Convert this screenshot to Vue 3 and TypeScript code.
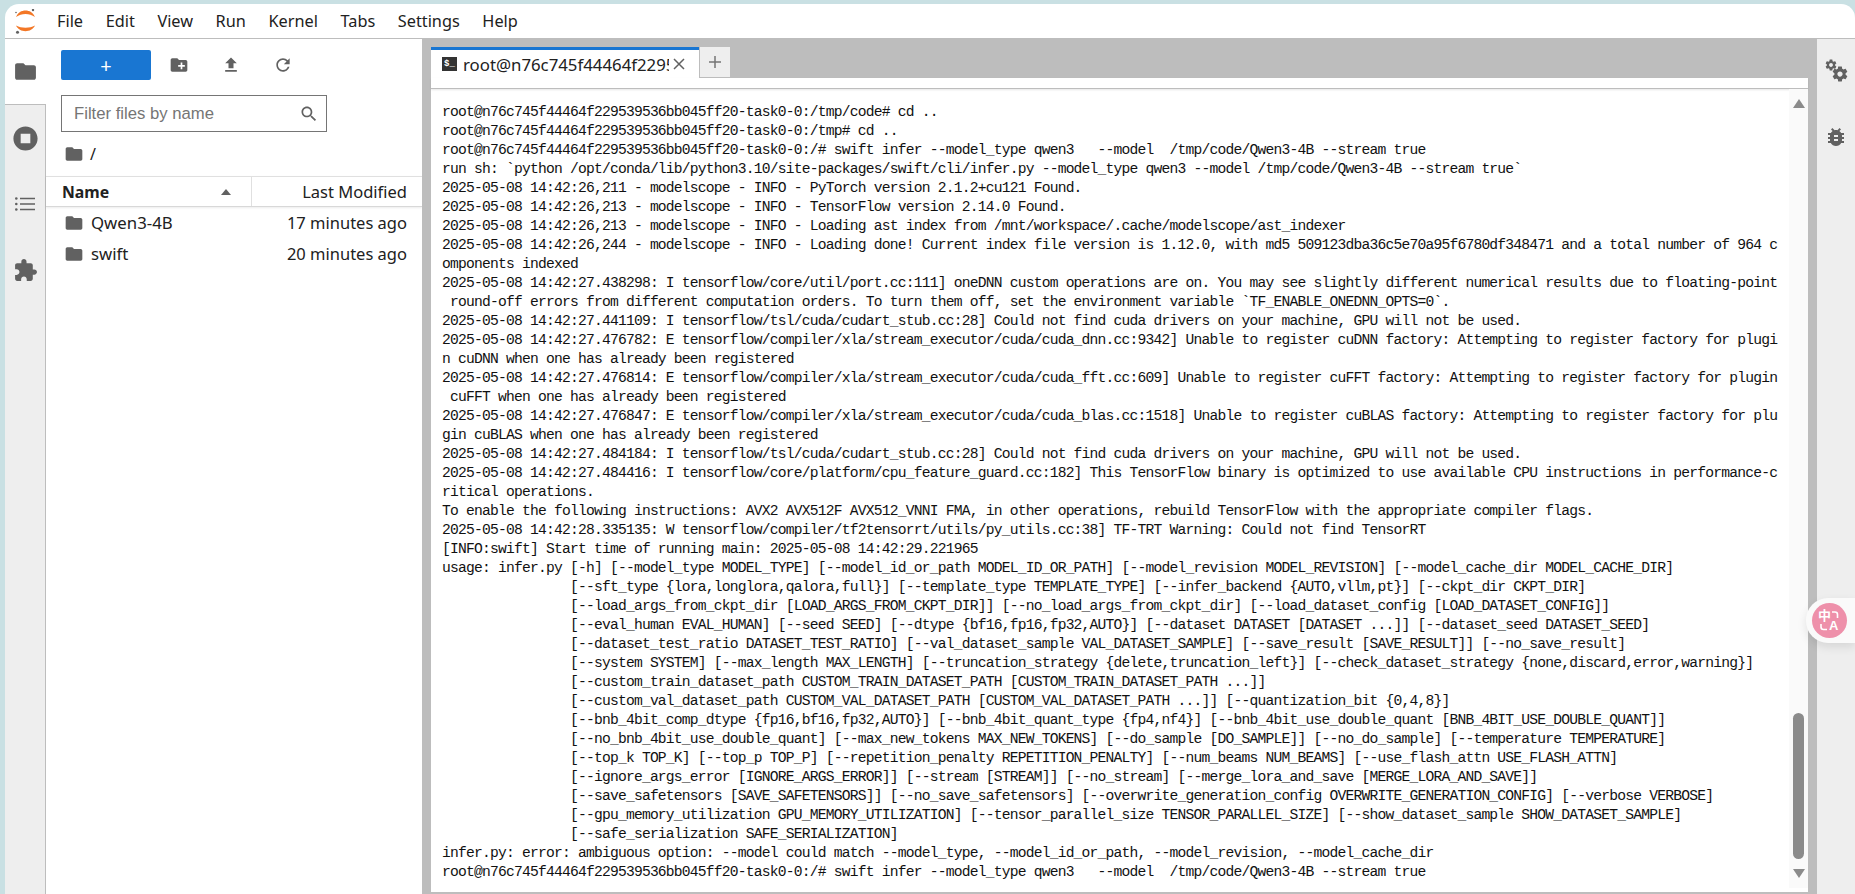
<script setup lang="ts">
const host = 'root@n76c745f44464f229539536bb045ff20-task0-0'
const pad = ' '.repeat(16)
const usageTail: string[] = [
  '[--sft_type {lora,longlora,qalora,full}] [--template_type TEMPLATE_TYPE] [--infer_backend {AUTO,vllm,pt}] [--ckpt_dir CKPT_DIR]',
  '[--load_args_from_ckpt_dir [LOAD_ARGS_FROM_CKPT_DIR]] [--no_load_args_from_ckpt_dir] [--load_dataset_config [LOAD_DATASET_CONFIG]]',
  '[--eval_human EVAL_HUMAN] [--seed SEED] [--dtype {bf16,fp16,fp32,AUTO}] [--dataset DATASET [DATASET ...]] [--dataset_seed DATASET_SEED]',
  '[--dataset_test_ratio DATASET_TEST_RATIO] [--val_dataset_sample VAL_DATASET_SAMPLE] [--save_result [SAVE_RESULT]] [--no_save_result]',
  '[--system SYSTEM] [--max_length MAX_LENGTH] [--truncation_strategy {delete,truncation_left}] [--check_dataset_strategy {none,discard,error,warning}]',
  '[--custom_train_dataset_path CUSTOM_TRAIN_DATASET_PATH [CUSTOM_TRAIN_DATASET_PATH ...]]',
  '[--custom_val_dataset_path CUSTOM_VAL_DATASET_PATH [CUSTOM_VAL_DATASET_PATH ...]] [--quantization_bit {0,4,8}]',
  '[--bnb_4bit_comp_dtype {fp16,bf16,fp32,AUTO}] [--bnb_4bit_quant_type {fp4,nf4}] [--bnb_4bit_use_double_quant [BNB_4BIT_USE_DOUBLE_QUANT]]',
  '[--no_bnb_4bit_use_double_quant] [--max_new_tokens MAX_NEW_TOKENS] [--do_sample [DO_SAMPLE]] [--no_do_sample] [--temperature TEMPERATURE]',
  '[--top_k TOP_K] [--top_p TOP_P] [--repetition_penalty REPETITION_PENALTY] [--num_beams NUM_BEAMS] [--use_flash_attn USE_FLASH_ATTN]',
  '[--ignore_args_error [IGNORE_ARGS_ERROR]] [--stream [STREAM]] [--no_stream] [--merge_lora_and_save [MERGE_LORA_AND_SAVE]]',
  '[--save_safetensors [SAVE_SAFETENSORS]] [--no_save_safetensors] [--overwrite_generation_config OVERWRITE_GENERATION_CONFIG] [--verbose VERBOSE]',
  '[--gpu_memory_utilization GPU_MEMORY_UTILIZATION] [--tensor_parallel_size TENSOR_PARALLEL_SIZE] [--show_dataset_sample SHOW_DATASET_SAMPLE]',
  '[--safe_serialization SAFE_SERIALIZATION]',
]
const lines: string[] = [
  `${host}:/tmp/code# cd ..`,
  `${host}:/tmp# cd ..`,
  `${host}:/# swift infer --model_type qwen3   --model  /tmp/code/Qwen3-4B --stream true`,
  'run sh: `python /opt/conda/lib/python3.10/site-packages/swift/cli/infer.py --model_type qwen3 --model /tmp/code/Qwen3-4B --stream true`',
  '2025-05-08 14:42:26,211 - modelscope - INFO - PyTorch version 2.1.2+cu121 Found.',
  '2025-05-08 14:42:26,213 - modelscope - INFO - TensorFlow version 2.14.0 Found.',
  '2025-05-08 14:42:26,213 - modelscope - INFO - Loading ast index from /mnt/workspace/.cache/modelscope/ast_indexer',
  '2025-05-08 14:42:26,244 - modelscope - INFO - Loading done! Current index file version is 1.12.0, with md5 509123dba36c5e70a95f6780df348471 and a total number of 964 c',
  'omponents indexed',
  '2025-05-08 14:42:27.438298: I tensorflow/core/util/port.cc:111] oneDNN custom operations are on. You may see slightly different numerical results due to floating-point',
  ' round-off errors from different computation orders. To turn them off, set the environment variable `TF_ENABLE_ONEDNN_OPTS=0`.',
  '2025-05-08 14:42:27.441109: I tensorflow/tsl/cuda/cudart_stub.cc:28] Could not find cuda drivers on your machine, GPU will not be used.',
  '2025-05-08 14:42:27.476782: E tensorflow/compiler/xla/stream_executor/cuda/cuda_dnn.cc:9342] Unable to register cuDNN factory: Attempting to register factory for plugi',
  'n cuDNN when one has already been registered',
  '2025-05-08 14:42:27.476814: E tensorflow/compiler/xla/stream_executor/cuda/cuda_fft.cc:609] Unable to register cuFFT factory: Attempting to register factory for plugin',
  ' cuFFT when one has already been registered',
  '2025-05-08 14:42:27.476847: E tensorflow/compiler/xla/stream_executor/cuda/cuda_blas.cc:1518] Unable to register cuBLAS factory: Attempting to register factory for plu',
  'gin cuBLAS when one has already been registered',
  '2025-05-08 14:42:27.484184: I tensorflow/tsl/cuda/cudart_stub.cc:28] Could not find cuda drivers on your machine, GPU will not be used.',
  '2025-05-08 14:42:27.484416: I tensorflow/core/platform/cpu_feature_guard.cc:182] This TensorFlow binary is optimized to use available CPU instructions in performance-c',
  'ritical operations.',
  'To enable the following instructions: AVX2 AVX512F AVX512_VNNI FMA, in other operations, rebuild TensorFlow with the appropriate compiler flags.',
  '2025-05-08 14:42:28.335135: W tensorflow/compiler/tf2tensorrt/utils/py_utils.cc:38] TF-TRT Warning: Could not find TensorRT',
  '[INFO:swift] Start time of running main: 2025-05-08 14:42:29.221965',
  'usage: infer.py [-h] [--model_type MODEL_TYPE] [--model_id_or_path MODEL_ID_OR_PATH] [--model_revision MODEL_REVISION] [--model_cache_dir MODEL_CACHE_DIR]',
  ...usageTail.map((l) => pad + l),
  'infer.py: error: ambiguous option: --model could match --model_type, --model_id_or_path, --model_revision, --model_cache_dir',
  `${host}:/# swift infer --model_type qwen3   --model  /tmp/code/Qwen3-4B --stream true`,
]
const menus: string[] = ['File', 'Edit', 'View', 'Run', 'Kernel', 'Tabs', 'Settings', 'Help']
const files = [
  { name: 'Qwen3-4B', time: '17 minutes ago' },
  { name: 'swift', time: '20 minutes ago' },
]
const folder = 'M10 4H4c-1.1 0-1.99.9-1.99 2L2 18c0 1.1.9 2 2 2h16c1.1 0 2-.9 2-2V8c0-1.1-.9-2-2-2h-8l-2-2z'
const gear = 'M19.43 12.98c.04-.32.07-.64.07-.98s-.03-.66-.07-.98l2.11-1.65c.19-.15.24-.42.12-.64l-2-3.46c-.12-.22-.39-.3-.61-.22l-2.49 1c-.52-.4-1.08-.73-1.69-.98l-.38-2.65C14.46 2.18 14.25 2 14 2h-4c-.25 0-.46.18-.49.42l-.38 2.65c-.61.25-1.17.59-1.69.98l-2.49-1c-.23-.09-.49 0-.61.22l-2 3.46c-.13.22-.07.49.12.64l2.11 1.65c-.04.32-.07.65-.07.98s.03.66.07.98l-2.11 1.65c-.19.15-.24.42-.12.64l2 3.46c.12.22.39.3.61.22l2.49-1c.52.4 1.08.73 1.69.98l.38 2.65c.03.24.24.42.49.42h4c.25 0 .46-.18.49-.42l.38-2.65c.61-.25 1.17-.59 1.69-.98l2.49 1c.23.09.49 0 .61-.22l2-3.46c.12-.22.07-.49-.12-.64l-2.11-1.65zM12 15.5c-1.93 0-3.5-1.57-3.5-3.5s1.57-3.5 3.5-3.5 3.5 1.57 3.5 3.5-1.57 3.5-3.5 3.5z'
</script>

<template>
  <div class="shell">
    <header class="topbar">
      <svg class="logo" viewBox="0 0 21 25" width="21" height="25">
        <path d="M1 8C3 3.500 6.500 1.500 10.500 1.500S18 3.500 20 8C17 6 14 5 10.500 5S4 6 1 8z" fill="#f37726" />
        <path d="M1 16.500C3 20.500 6.500 22.200 10.500 22.200S18 20.500 20 16.500C17 18 14 18.700 10.500 18.700S4 18 1 16.500z" fill="#f37726" />
        <circle cx="18" cy="1" r="1.200" fill="#616161" />
        <circle cx="1" cy="3.500" r=".8" fill="#616161" />
        <circle cx="2.500" cy="23.300" r="1.500" fill="#616161" />
      </svg>
      <nav class="menu">
        <span v-for="m in menus" :key="m" class="menu-item">{{ m }}</span>
      </nav>
    </header>
    <main class="body">
      <aside class="rail">
        <div class="rail-tab active">
          <svg viewBox="0 0 24 24" width="25" height="25"><path :d="folder" /></svg>
        </div>
        <div class="rail-rest">
          <div class="rail-tab">
            <svg viewBox="0 0 24 24" width="29" height="29"><path d="M12 2C6.480 2 2 6.480 2 12s4.480 10 10 10 10-4.480 10-10S17.520 2 12 2zm4 14H8V8h8v8z" /></svg>
          </div>
          <div class="rail-tab">
            <svg viewBox="0 0 20 14" width="20" height="14">
              <circle cx="1.300" cy="1.500" r="1.300" /><circle cx="1.300" cy="7" r="1.300" /><circle cx="1.300" cy="12.500" r="1.300" />
              <path d="M5 .7h15v1.600H5zM5 6.200h15v1.600H5zM5 11.700h15v1.600H5z" />
            </svg>
          </div>
          <div class="rail-tab">
            <svg viewBox="0 0 24 24" width="25" height="25"><path d="M20.500 11H19V7c0-1.100-.9-2-2-2h-4V3.500C13 2.120 11.880 1 10.500 1S8 2.120 8 3.500V5H4c-1.100 0-1.990.9-1.990 2v3.800H3.500c1.490 0 2.700 1.210 2.700 2.700s-1.210 2.700-2.700 2.700H2V20c0 1.100.9 2 2 2h3.800v-1.500c0-1.490 1.210-2.700 2.700-2.700 1.490 0 2.700 1.210 2.700 2.700V22H17c1.100 0 2-.9 2-2v-4h1.500c1.380 0 2.500-1.120 2.500-2.500S21.880 11 20.500 11z" /></svg>
          </div>
        </div>
      </aside>

      <section class="files">
        <div class="toolbar">
          <button class="new-btn" type="button">+</button>
          <svg class="tool" viewBox="0 0 24 24" width="20" height="20"><path d="M20 6h-8l-2-2H4c-1.110 0-1.990.89-1.990 2L2 18c0 1.110.89 2 2 2h16c1.110 0 2-.89 2-2V8c0-1.110-.89-2-2-2zm-1 8h-3v3h-2v-3h-3v-2h3V9h2v3h3v2z" /></svg>
          <svg class="tool" viewBox="0 0 24 24" width="20" height="20"><path d="M9 16h6v-6h4l-7-7-7 7h4zm-4 2h14v2H5z" /></svg>
          <svg class="tool" viewBox="0 0 24 24" width="20" height="20"><path d="M17.650 6.350C16.200 4.900 14.210 4 12 4c-4.420 0-7.990 3.580-7.990 8s3.570 8 7.990 8c3.730 0 6.840-2.550 7.730-6h-2.080c-.82 2.330-3.040 4-5.650 4-3.310 0-6-2.690-6-6s2.690-6 6-6c1.660 0 3.140.69 4.220 1.780L13 11h7V4l-2.350 2.350z" /></svg>
        </div>
        <div class="filter">
          <span class="filter-text">Filter files by name</span>
          <svg viewBox="0 0 24 24" width="20" height="20"><path d="M15.500 14h-.79l-.28-.27C15.410 12.590 16 11.110 16 9.500 16 5.910 13.090 3 9.500 3S3 5.910 3 9.500 5.910 16 9.500 16c1.610 0 3.090-.59 4.230-1.570l.27.28v.79l5 4.990L20.490 19l-4.990-5zm-6 0C7.010 14 5 11.990 5 9.500S7.010 5 9.500 5 14 7.010 14 9.500 11.990 14 9.500 14z" /></svg>
        </div>
        <div class="crumb">
          <svg viewBox="0 0 24 24" width="20" height="20"><path :d="folder" /></svg>
          <span>/</span>
        </div>
        <div class="thead">
          <div class="th-name"><span>Name</span><i class="caret"></i></div>
          <div class="th-mod">Last Modified</div>
        </div>
        <div v-for="f in files" :key="f.name" class="row">
          <svg viewBox="0 0 24 24" width="20" height="20"><path :d="folder" /></svg>
          <span class="row-name">{{ f.name }}</span>
          <span class="row-time">{{ f.time }}</span>
        </div>
      </section>

      <section class="dock">
        <div class="tabs">
          <div class="tab">
            <span class="term-icon">$_</span>
            <span class="tab-title">root@n76c745f44464f229539536bb045ff20-task0-0:/tmp</span>
            <svg viewBox="0 0 12 12" width="12" height="12"><path d="M1 1l10 10M11 1L1 11" stroke="#616161" stroke-width="1.500" fill="none" /></svg>
          </div>
          <div class="add-tab">
            <svg viewBox="0 0 12 12" width="12" height="12"><path d="M6 0v12M0 6h12" stroke="#757575" stroke-width="1.500" fill="none" /></svg>
          </div>
        </div>
        <div class="term-head"></div>
        <div class="term">
          <div class="term-text">
            <div v-for="(l, i) in lines" :key="i" class="line">{{ l }}</div>
          </div>
          <div class="scroll">
            <i class="arrow up"></i>
            <i class="thumb"></i>
            <i class="arrow down"></i>
          </div>
        </div>
      </section>

      <aside class="right-rail">
        <svg viewBox="0 0 24 24" width="24" height="24" class="gears">
          <g transform="translate(.4 .4) scale(.55)"><path :d="gear" /></g>
          <g transform="translate(7 7) scale(.75)"><path :d="gear" /></g>
        </svg>
        <svg viewBox="0 0 24 24" width="24" height="24"><path d="M20 8h-2.810c-.45-.78-1.070-1.450-1.820-1.960L17 4.410 15.590 3l-2.170 2.170C12.960 5.060 12.490 5 12 5c-.49 0-.96.06-1.410.17L8.410 3 7 4.410l1.620 1.630C7.880 6.550 7.260 7.220 6.810 8H4v2h2.090c-.05.33-.09.66-.09 1v1H4v2h2v1c0 .34.04.67.09 1H4v2h2.810c1.040 1.790 2.970 3 5.190 3s4.150-1.210 5.190-3H20v-2h-2.090c.05-.33.09-.66.09-1v-1h2v-2h-2v-1c0-.34-.04-.67-.09-1H20V8zm-6 8h-4v-2h4v2zm0-4h-4v-2h4v2z" /></svg>
      </aside>
    </main>

    <div class="translate">
      <div class="translate-dot">
        <svg class="brackets" viewBox="0 0 35 35" width="35" height="35">
          <path d="M20 9h3a2.500 2.500 0 0 1 2.500 2.500V15M9 21v3a2.500 2.500 0 0 0 2.500 2.500H15" fill="none" stroke="#fff" stroke-width="1.600" />
        </svg>
        <span class="zh">中</span><span class="en">A</span>
      </div>
    </div>
  </div>
</template>

<style>
html, body { margin: 0; height: 100%; overflow: hidden; background: #c9e0e3; }
</style>

<style scoped>
.shell {
  position: relative;
  box-sizing: border-box;
  margin: 4px 0 0 5px;
  height: 890px;
  display: flex;
  flex-direction: column;
  background: #fff;
  border-radius: 14px 14px 0 0;
  overflow: hidden;
  font-family: "Noto Sans", "Open Sans", sans-serif;
  color: #212121;
}
svg { fill: #616161; display: block; flex: none; }

.topbar {
  flex: none;
  height: 35px;
  box-sizing: border-box;
  border-bottom: 1px solid #bdbdbd;
  display: flex;
  align-items: center;
  padding-left: 10px;
}
.menu { display: flex; margin-left: 21px; gap: 22.600px; font-size: 16.300px; }
.body { flex: 1; display: flex; min-height: 0; }

.rail { flex: none; width: 41px; display: flex; flex-direction: column; }
.rail-tab { height: 66px; display: flex; align-items: center; justify-content: center; }
.rail-rest {
  flex: 1;
  background: #eee;
  border-top: 1px solid #bdbdbd;
  border-right: 1px solid #bdbdbd;
}
.rail-tab.active { width: 40px; height: 65px; }

.files { flex: none; width: 376px; display: flex; flex-direction: column; }
.toolbar { display: flex; align-items: center; height: 30px; margin: 11px 0 0 15px; }
.new-btn {
  width: 90px;
  height: 30px;
  padding: 0;
  border: 0;
  border-radius: 2px;
  background: #1976d2;
  color: #fff;
  font: 400 20px "Noto Sans", sans-serif;
}
.tool { margin-left: 18px; }
.tool + .tool { margin-left: 32px; }
.filter {
  box-sizing: border-box;
  width: 266px;
  height: 37px;
  margin: 15px 0 0 15px;
  border: 1px solid #757575;
  display: flex;
  align-items: center;
  justify-content: space-between;
  padding: 0 7px 0 12px;
}
.filter-text { font: 16.700px "Liberation Sans", Arial, sans-serif; color: #757575; }
.crumb {
  height: 22px;
  margin: 11px 0 0 18px;
  display: flex;
  align-items: center;
  gap: 6px;
  font-size: 16px;
}
.thead {
  height: 31px;
  margin-top: 11px;
  box-sizing: border-box;
  border-top: 1px solid #e0e0e0;
  border-bottom: 1px solid #d8d8d8;
  box-shadow: 0 1px 2px rgba(0, 0, 0, .08);
  display: flex;
  align-items: center;
  font-size: 16.500px;
}
.th-name {
  box-sizing: border-box;
  width: 206px;
  height: 100%;
  padding: 0 20px 0 16px;
  display: flex;
  align-items: center;
  justify-content: space-between;
  font-weight: 700;
  font-size: 15.800px;
  border-right: 1px solid #e0e0e0;
}
.caret {
  width: 0;
  height: 0;
  border-left: 5px solid transparent;
  border-right: 5px solid transparent;
  border-bottom: 6px solid #616161;
}
.th-mod { flex: 1; text-align: right; padding-right: 15px; }
.row { height: 31px; display: flex; align-items: center; padding: 0 15px 0 18px; font-size: 16.500px; }
.row-name { margin-left: 7px; flex: 1; font-size: 16.800px; }

.dock {
  flex: 1;
  min-width: 0;
  background: #bdbdbd;
  padding: 8px 9px 2px 9px;
  display: flex;
  flex-direction: column;
}
.tabs { flex: none; height: 31px; display: flex; }
.tab {
  box-sizing: border-box;
  width: 268px;
  background: #fff;
  border-top: 3px solid #1976d2;
  display: flex;
  align-items: center;
  padding: 0 14px 0 11px;
}
.term-icon {
  flex: none;
  width: 15px;
  height: 14px;
  background: #333;
  color: #fff;
  font: 700 9px/14px "Liberation Mono", monospace;
  text-align: center;
}
.tab-title {
  flex: 1;
  min-width: 0;
  margin: 0 4px 0 6px;
  overflow: hidden;
  white-space: nowrap;
  font-size: 16.800px;
}
.add-tab {
  width: 30px;
  margin-left: 1px;
  background: #eee;
  border-bottom: 1px solid #bdbdbd;
  box-sizing: border-box;
  display: flex;
  align-items: center;
  justify-content: center;
}
.term-head {
  flex: none;
  height: 11px;
  box-sizing: border-box;
  background: #fff;
  border-bottom: 1px solid #bdbdbd;
  box-shadow: 0 1px 2px rgba(0, 0, 0, .1);
  position: relative;
}
.term { flex: 1; min-height: 0; background: #fff; display: flex; }
.term-text { flex: 1; min-width: 0; padding: 14px 0 0 11px; overflow: hidden; }
.line {
  height: 19px;
  line-height: 19px;
  white-space: pre;
  font-family: "Liberation Mono", monospace;
  font-size: 14.667px;
  letter-spacing: -.8px;
  color: #111;
}
.scroll {
  flex: none;
  width: 19px;
  height: 799px;
  background: #fafafa;
  position: relative;
  display: flex;
  flex-direction: column;
  align-items: center;
}
.arrow { width: 0; height: 0; border-left: 6.500px solid transparent; border-right: 6.500px solid transparent; }
.arrow.up { margin-top: 10px; border-bottom: 9px solid #8b8b8b; }
.thumb { width: 11px; height: 146px; margin-top: 605px; border-radius: 6px; background: #8b8b8b; }
.arrow.down { margin-top: 10px; border-top: 9px solid #8b8b8b; }

.right-rail {
  flex: none;
  width: 38px;
  box-sizing: border-box;
  background: #eee;
  padding: 19px 0 0 0;
  display: flex;
  flex-direction: column;
  align-items: center;
  gap: 43px;
}

.translate {
  position: absolute;
  right: 0;
  top: 594px;
  width: 49px;
  height: 45px;
  box-sizing: border-box;
  border-radius: 22px 0 0 22px;
  background: #fafafa;
  box-shadow: 0 4px 10px rgba(0, 0, 0, .1);
  padding: 5px 0 0 6px;
}
.translate-dot {
  position: relative;
  width: 35px;
  height: 35px;
  border-radius: 50%;
  background: #ee90aa;
  color: #fff;
}
.brackets { position: absolute; left: 0; top: 0; }
.zh { position: absolute; left: 6px; top: 4px; font: 700 13px/15px "Noto Sans CJK SC", sans-serif; }
.en { position: absolute; left: 17px; top: 15px; font: 700 13px/15px "Liberation Sans", sans-serif; }
</style>
